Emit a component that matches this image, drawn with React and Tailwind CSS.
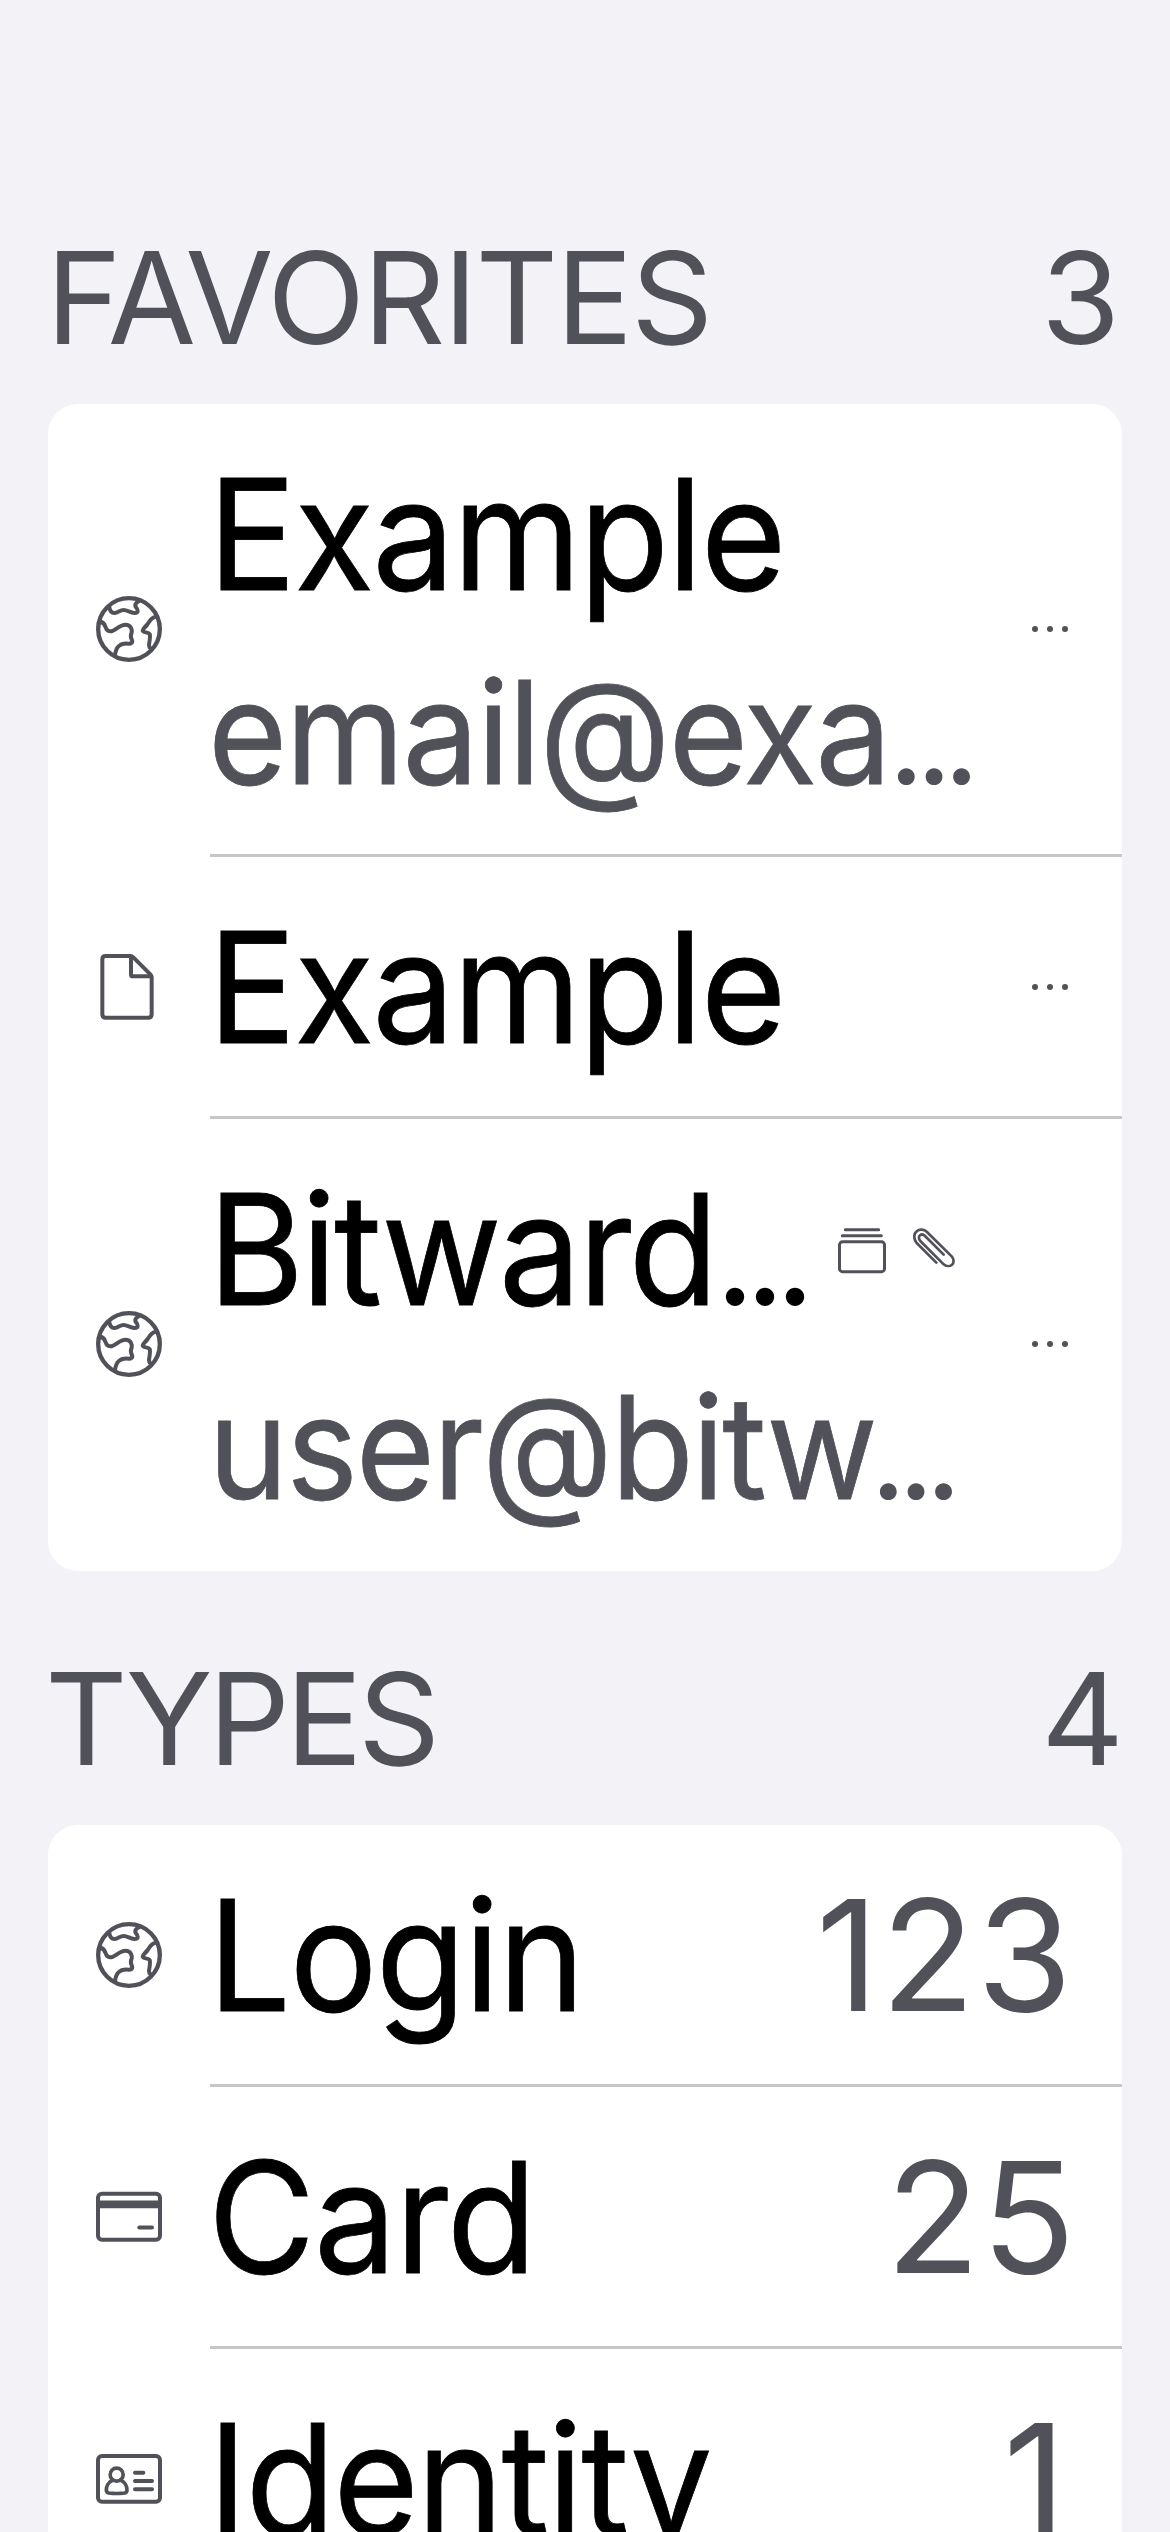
const iconProps = {
  fill: "none",
  stroke: "currentColor",
  strokeWidth: 12,
  strokeLinecap: "round",
  strokeLinejoin: "round",
  "aria-hidden": true,
};

function GlobeIcon() {
  return (
    <svg {...iconProps} viewBox="48 48 198 198" className="size-[66px] shrink-0">
      <circle cx="147" cy="147" r="92.5" strokeWidth="13" />
      <path d="M88 82C90 92 94 100 104 99C114 98 120 90 131 90C142 90 150 98 163 99C178 99 173 88 168 82C162 73 170 66 180 62" />
      <path d="M57 127C68 124 73 131 76 140C80 153 88 156 97 153C110 148 120 134 137 134C152 134 157 148 155 158C150 168 152 172 155 178C160 188 154 191 145 191C122 189 108 198 105 226" />
      <path d="M226 111C214 112 210 122 203 132C196 142 188 146 188 152C189 158 205 156 209 162C212 170 208 185 207 195C208 203 211 206 215 206" />
    </svg>
  );
}

function FileIcon() {
  return (
    <svg {...iconProps} viewBox="48 72 198 198" className="size-[66px] shrink-0">
      <path d="M77 78H151Q156 78 160 82L211 133Q215 137 215 142V253Q215 263 205 263H77Q67 263 67 253V88Q67 78 77 78Z" />
      <path d="M153 80V134Q153 139 158 139H213" />
    </svg>
  );
}

function CardIcon() {
  return (
    <svg {...iconProps} viewBox="48 40.5 198 198" className="size-[66px] shrink-0">
      <rect x="54" y="70" width="186" height="138" rx="12" />
      <path d="M54 101.5H240" strokeWidth="23" strokeLinecap="butt" />
      <path d="M178 171H216" />
    </svg>
  );
}

function IdentityIcon() {
  return (
    <svg {...iconProps} viewBox="48 45 198 198" className="size-[66px] shrink-0">
      <rect x="54" y="75" width="186" height="137" rx="12" />
      <circle cx="110" cy="131" r="19.5" strokeWidth="11" />
      <path
        d="M98 148C85 153 79 166 79 177C79 183 82 185 86 186C102 188 118 188 134 186C138 185 141 183 141 177C141 166 135 153 122 148"
        strokeWidth="11"
      />
      <path d="M165 125H190M165 150H216M165 175H216" />
    </svg>
  );
}

function CollectionIcon() {
  return (
    <svg {...iconProps} strokeWidth="9" viewBox="54 83 144 138" className="h-[46px] w-12 shrink-0">
      <path d="M76 88.5H176M67 106H184" />
      <rect x="58.5" y="124.5" width="135" height="89.5" rx="9" />
    </svg>
  );
}

function PaperclipIcon() {
  return (
    <svg {...iconProps} strokeWidth="8" viewBox="279 83 126 138" className="h-[46px] w-[42px] shrink-0">
      <path d="M349 187L290 128C279 115 282 99 290 93C298 86 312 86 321 95L395 168C403 177 402 188 396 193C389 199 378 198 371 192L301 122C295 115 296 107 300 105C305 101 311 103 315 107L371 163" />
    </svg>
  );
}

function MoreIcon() {
  return (
    <svg viewBox="0 0 36 6" fill="currentColor" className="h-1.5 w-9 shrink-0" aria-hidden="true">
      <circle cx="3" cy="3" r="3" />
      <circle cx="18" cy="3" r="3" />
      <circle cx="33" cy="3" r="3" />
    </svg>
  );
}

function Label({ className, children }) {
  return (
    <span className={`inline-block origin-left scale-x-95 whitespace-nowrap [-webkit-text-stroke:0.8px_currentColor] ${className}`}>
      {children}
    </span>
  );
}

function Title({ className, children }) {
  return (
    <div className="-ml-0.5 h-[190px] text-[154.5px] leading-[190px] text-black">
      <Label className={className}>{children}</Label>
    </div>
  );
}

function Row({ icon, className, children }) {
  return (
    <div className={`flex pl-12 ${className}`}>
      <div className="mr-12 flex items-center">{icon}</div>
      {children}
    </div>
  );
}

function RowBody({ divider, className = "", children }) {
  return (
    <div
      className={`flex min-w-0 flex-1 items-center justify-between ${
        divider ? "shadow-[0_3px_0_#c6c6c8]" : ""
      } ${className}`}
    >
      {children}
    </div>
  );
}

function SectionHeader({ title, count, titleClass, countClass }) {
  return (
    <div className="flex justify-between pb-[29px] text-[128px] leading-[155px]">
      <h2 className={titleClass}>{title}</h2>
      <span className={countClass}>{count}</span>
    </div>
  );
}

const types = [
  { name: "Login", count: "123", icon: <GlobeIcon />, nameClass: "tracking-[-1.65px]", countClass: "tracking-[1.8px] mr-12" },
  { name: "Card", count: "25", icon: <CardIcon />, nameClass: "tracking-[-1.3px]", countClass: "tracking-[1.5px] mr-[45px]" },
  { name: "Identity", count: "1", icon: <IdentityIcon />, nameClass: "tracking-[-2.1px]", countClass: "mr-14" },
];

export default function App() {
  return (
    <main className="h-[2532px] w-[1170px] overflow-hidden bg-[#f2f2f7] px-12 pt-[220px] font-['Inter',sans-serif] text-[#515159]">
      <section>
        <SectionHeader
          title="FAVORITES"
          count="3"
          titleClass="-ml-0.5 tracking-[-2.1px]"
          countClass="mr-0.5"
        />
        <div className="overflow-hidden rounded-[30px] bg-white">
          <Row icon={<GlobeIcon />} className="mb-[3px] h-[450px]">
            <RowBody divider className="pr-[54px]">
              <div className="flex flex-col gap-[15px]">
                <Title className="tracking-[-2.1px]">Example</Title>
                <div className="flex h-[175px] items-baseline text-[143px] leading-[175px]">
                  <div className="-ml-0.5 w-[680px]">
                    <Label className="tracking-[-1.9px]">email@exa</Label>
                  </div>
                  <span className="text-[127px] tracking-[-8.9px]">...</span>
                </div>
              </div>
              <MoreIcon />
            </RowBody>
          </Row>
          <Row icon={<FileIcon />} className="mb-[3px] h-[259px]">
            <RowBody divider className="pr-[54px]">
              <Title className="tracking-[-2.1px]">Example</Title>
              <MoreIcon />
            </RowBody>
          </Row>
          <Row icon={<GlobeIcon />} className="mb-0.5 h-[450px]">
            <RowBody className="pr-[54px]">
              <div className="flex flex-col gap-[15px]">
                <div className="flex h-[190px] items-center">
                  <div className="flex h-[190px] w-[628px] items-baseline text-[154.5px] leading-[190px] text-black">
                    <div className="-ml-0.5 w-[507px] shrink-0">
                      <Label className="tracking-[-2.9px]">Bitward</Label>
                    </div>
                    <span className="text-[139px] tracking-[-10px]">...</span>
                  </div>
                  <div className="mt-[3px] flex gap-[27px]">
                    <CollectionIcon />
                    <PaperclipIcon />
                  </div>
                </div>
                <div className="flex h-[175px] items-baseline text-[143px] leading-[175px]">
                  <div className="-ml-0.5 w-[662px]">
                    <Label className="tracking-[-2.3px]">user@bitw</Label>
                  </div>
                  <span className="text-[127px] tracking-[-8.9px]">...</span>
                </div>
              </div>
              <MoreIcon />
            </RowBody>
          </Row>
        </div>
      </section>

      <section className="mt-[70px]">
        <SectionHeader
          title="TYPES"
          count="4"
          titleClass="-ml-[3px] tracking-[-4.4px]"
          countClass="-mr-0.5"
        />
        <div className="overflow-hidden rounded-[30px] bg-white">
          {types.map((type) => (
            <Row key={type.name} icon={type.icon} className="mb-[3px] h-[259px]">
              <RowBody divider>
                <Title className={type.nameClass}>{type.name}</Title>
                <span className={`text-[154.5px] leading-[190px] ${type.countClass}`}>
                  {type.count}
                </span>
              </RowBody>
            </Row>
          ))}
        </div>
      </section>
    </main>
  );
}
